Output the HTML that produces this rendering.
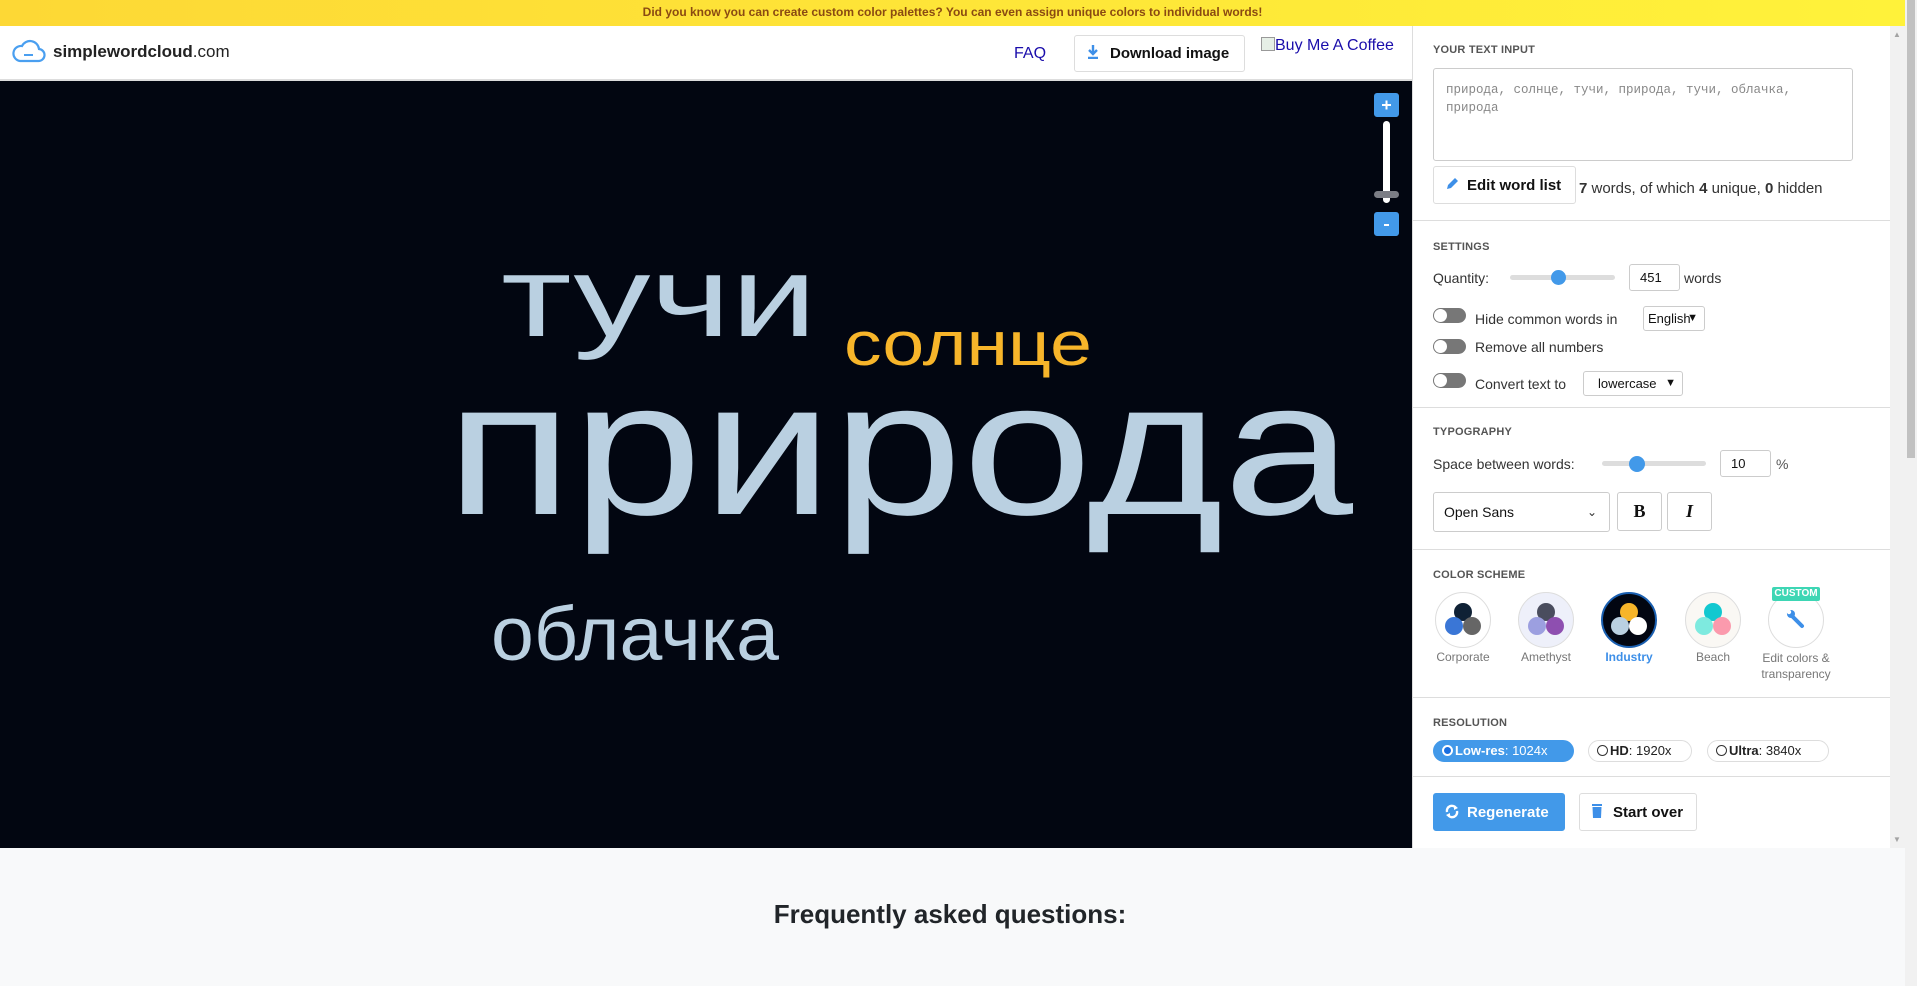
<!DOCTYPE html>
<html><head><meta charset="utf-8">
<style>
*{box-sizing:border-box;margin:0;padding:0}
body{width:1917px;height:986px;overflow:hidden;font-family:"Liberation Sans",sans-serif;background:#fff;position:relative;color:#222}
.a{position:absolute}
.banner{left:0;top:0;width:1905px;height:26px;background:linear-gradient(90deg,#fdd835,#fff23a);text-align:center;font-size:12px;font-weight:bold;color:#8a4a12;line-height:24px}
.h{font-size:11px;font-weight:bold;color:#555;letter-spacing:.2px}
.hr{height:1px;background:#ddd;left:1412px;width:478px}
.lbl{font-size:14px;color:#333}
.inp{border:1px solid #ccc;border-radius:3px;background:#fff;font-size:13px;color:#111;padding-left:10px;white-space:nowrap;overflow:hidden}
.tog{width:33px;height:15px;border-radius:8px;background:#777}
.tog:after{content:"";position:absolute;left:1px;top:1px;width:13px;height:13px;border-radius:50%;background:#fff}
.circ{width:56px;height:56px;border-radius:50%;border:1px solid #ddd}
.dot{position:absolute;width:18px;height:18px;border-radius:50%}
.cl{font-size:12px;color:#777;text-align:center;width:90px}
.pill{height:22px;border-radius:11px;border:1px solid #ddd;font-size:13px;line-height:20px;padding-left:8px;color:#222}
.rad{display:inline-block;width:11px;height:11px;border-radius:50%;border:1px solid #333;vertical-align:-1px;margin-right:2px;background:#fff}
.btn{border:1px solid #ccc;border-radius:3px;background:#fff;font-weight:bold;font-size:15px}
.car{position:absolute;right:6px;top:0;font-size:11px}
</style></head><body>
<div class="a banner">Did you know you can create custom color palettes? You can even assign unique colors to individual words!</div>

<svg class="a" style="left:12px;top:39px" width="34" height="24" viewBox="0 0 34 24"><path d="M8 22 H26 A6 6 0 0 0 27 10 A9 9 0 0 0 10 7 A7.5 7.5 0 0 0 8 22 Z" fill="none" stroke="#4a9ff0" stroke-width="2.2"/><path d="M12 16 H21" stroke="#4a9ff0" stroke-width="2"/></svg>
<div class="a" style="left:53px;top:42px;font-size:17px;color:#222"><b>simplewordcloud</b>.com</div>
<div class="a" style="left:1014px;top:45px;font-size:16px;color:#1a0dab">FAQ</div>
<div class="a btn" style="left:1074px;top:35px;width:171px;height:37px;border-color:#ddd;font-size:15px;padding:9px 0 0 35px;color:#111">Download image</div>
<svg class="a" style="left:1087px;top:45px" width="12" height="14"><path d="M6 0V8M2 5L6 9L10 5M1 13H11" stroke="#3d8fe8" stroke-width="2.4" fill="none"/></svg>
<div class="a" style="left:1261px;top:37px;font-size:16px;color:#1a0dab"><span style="display:inline-block;width:14px;height:14px;border:1px solid #999;vertical-align:-1px;background:#e6efe6"></span>Buy Me A Coffee</div>
<div class="a" style="left:0;top:79px;width:1412px;height:2px;background:#ddd"></div>

<div class="a" style="left:0;top:81px;width:1412px;height:767px;background:#020611"></div>
<svg class="a" style="left:0;top:0" width="1412" height="848">
<g font-family="Liberation Sans, sans-serif" fill="#bad0e1">
<text x="501" y="336" font-size="115" textLength="316" lengthAdjust="spacingAndGlyphs">тучи</text>
<text x="844" y="365" font-size="62" fill="#f7b52a" textLength="248" lengthAdjust="spacingAndGlyphs">солнце</text>
<text x="446" y="514" font-size="192" textLength="907" lengthAdjust="spacingAndGlyphs">природа</text>
<text x="491" y="660" font-size="76" textLength="288" lengthAdjust="spacingAndGlyphs">облачка</text>
</g>
<rect x="1374" y="93" width="25" height="24" rx="3" fill="#4299e9"/>
<path d="M1382 105H1391M1386.5 100.5V109.5" stroke="#fff" stroke-width="2"/>
<rect x="1383" y="121" width="7" height="82" rx="3.5" fill="#fff"/>
<rect x="1374" y="191" width="25" height="7" rx="3.5" fill="#7b7d85"/>
<rect x="1374" y="212" width="25" height="24" rx="3" fill="#4299e9"/>
<path d="M1384 225H1389" stroke="#fff" stroke-width="2"/>
</svg>

<div class="a" style="left:1412px;top:26px;width:1px;height:822px;background:#ddd"></div>
<div class="a h" style="left:1433px;top:44px">YOUR TEXT INPUT</div>
<div class="a inp" style="left:1433px;top:68px;width:420px;height:93px;padding:12px;font-family:'Liberation Mono',monospace;font-size:12.5px;color:#888;line-height:18px;white-space:normal">природа, солнце, тучи, природа, тучи, облачка, природа</div>
<div class="a btn" style="left:1433px;top:166px;width:143px;height:38px;border-color:#ddd;padding:10px 0 0 33px;color:#111">Edit word list</div>
<svg class="a" style="left:1445px;top:177px" width="14" height="14"><path d="M2 12L3 8L10 1L13 4L6 11Z" fill="#3d8fe8"/></svg>
<div class="a" style="left:1579px;top:180px;font-size:15px;color:#333"><b>7</b> words, of which <b>4</b> unique, <b>0</b> hidden</div>
<div class="a hr" style="top:220px"></div>

<div class="a h" style="left:1433px;top:241px">SETTINGS</div>
<div class="a lbl" style="left:1433px;top:270px">Quantity:</div>
<div class="a" style="left:1510px;top:275px;width:105px;height:5px;border-radius:3px;background:#ddd"></div>
<div class="a" style="left:1551px;top:270px;width:15px;height:15px;border-radius:50%;background:#4299e9"></div>
<div class="a inp" style="left:1629px;top:264px;width:51px;height:27px;line-height:25px">451</div>
<div class="a lbl" style="left:1684px;top:270px">words</div>
<div class="a tog" style="left:1433px;top:308px"></div>
<div class="a lbl" style="left:1475px;top:311px">Hide common words in</div>
<div class="a inp" style="left:1643px;top:306px;width:62px;height:25px;line-height:23px;padding-left:4px">English<span class="car">&#9660;</span></div>
<div class="a tog" style="left:1433px;top:339px"></div>
<div class="a lbl" style="left:1475px;top:339px">Remove all numbers</div>
<div class="a tog" style="left:1433px;top:373px"></div>
<div class="a lbl" style="left:1475px;top:376px">Convert text to</div>
<div class="a inp" style="left:1583px;top:371px;width:100px;height:25px;line-height:23px;padding-left:14px">lowercase<span class="car">&#9660;</span></div>
<div class="a hr" style="top:407px"></div>

<div class="a h" style="left:1433px;top:426px">TYPOGRAPHY</div>
<div class="a lbl" style="left:1433px;top:456px">Space between words:</div>
<div class="a" style="left:1602px;top:461px;width:104px;height:5px;border-radius:3px;background:#ddd"></div>
<div class="a" style="left:1629px;top:456px;width:16px;height:16px;border-radius:50%;background:#4299e9"></div>
<div class="a inp" style="left:1720px;top:450px;width:51px;height:27px;line-height:25px">10</div>
<div class="a lbl" style="left:1776px;top:456px;color:#555">%</div>
<div class="a inp" style="left:1433px;top:492px;width:177px;height:40px;line-height:38px;font-size:14px">Open Sans<span style="position:absolute;right:12px;top:0;color:#333;font-size:12px">&#8964;</span></div>
<div class="a inp" style="left:1617px;top:492px;width:45px;height:39px;text-align:center;padding:0;line-height:37px;font-family:'Liberation Serif',serif;font-weight:bold;font-size:18px">B</div>
<div class="a inp" style="left:1667px;top:492px;width:45px;height:39px;text-align:center;padding:0;line-height:37px;font-family:'Liberation Serif',serif;font-style:italic;font-weight:bold;font-size:18px">I</div>
<div class="a hr" style="top:549px"></div>

<div class="a h" style="left:1433px;top:569px">COLOR SCHEME</div>
<div class="a circ" style="left:1435px;top:592px;background:#fff"><div class="dot" style="left:18px;top:10px;background:#0f2135"></div><div class="dot" style="left:9px;top:24px;background:#3a76d6"></div><div class="dot" style="left:27px;top:24px;background:#666"></div></div>
<div class="a circ" style="left:1518px;top:592px;background:#eef0fa"><div class="dot" style="left:18px;top:10px;background:#4a4d5e"></div><div class="dot" style="left:9px;top:24px;background:#9c9fe0"></div><div class="dot" style="left:27px;top:24px;background:#8e4fb0"></div></div>
<div class="a circ" style="left:1601px;top:592px;background:#020611;border:2px solid #1a5fb0"><div class="dot" style="left:17px;top:9px;background:#f7b52a"></div><div class="dot" style="left:8px;top:23px;background:#bad0e1"></div><div class="dot" style="left:26px;top:23px;background:#fff"></div></div>
<div class="a circ" style="left:1685px;top:592px;background:#faf8f4"><div class="dot" style="left:18px;top:10px;background:#12c8d0"></div><div class="dot" style="left:9px;top:24px;background:#7eeadf"></div><div class="dot" style="left:27px;top:24px;background:#fb9aad"></div></div>
<div class="a circ" style="left:1768px;top:592px;background:#fff"></div>
<svg class="a" style="left:1786px;top:609px" width="20" height="20"><path d="M3 4L8 9M8 9L16 17" stroke="#3d8fe8" stroke-width="4" stroke-linecap="round"/><circle cx="5" cy="5" r="4" fill="#3d8fe8"/><circle cx="3" cy="3" r="2.2" fill="#fff"/></svg>
<div class="a" style="left:1772px;top:587px;width:48px;height:14px;background:#3dd6b4;color:#fff;font-size:10px;font-weight:bold;text-align:center;line-height:14px;border-radius:2px">CUSTOM</div>
<div class="a cl" style="left:1418px;top:650px">Corporate</div>
<div class="a cl" style="left:1501px;top:650px">Amethyst</div>
<div class="a cl" style="left:1584px;top:650px;color:#3d8fe8;font-weight:bold">Industry</div>
<div class="a cl" style="left:1668px;top:650px">Beach</div>
<div class="a cl" style="left:1751px;top:650px;line-height:16px;width:90px">Edit colors &amp; transparency</div>
<div class="a hr" style="top:697px"></div>

<div class="a h" style="left:1433px;top:717px">RESOLUTION</div>
<div class="a pill" style="left:1433px;top:740px;width:141px;background:#4299e9;border-color:#4299e9;color:#fff"><span class="rad" style="border:2px solid #fff;background:#1a6fe0"></span><b>Low-res</b>: 1024x</div>
<div class="a pill" style="left:1588px;top:740px;width:104px"><span class="rad"></span><b>HD</b>: 1920x</div>
<div class="a pill" style="left:1707px;top:740px;width:122px"><span class="rad"></span><b>Ultra</b>: 3840x</div>
<div class="a hr" style="top:776px"></div>

<div class="a btn" style="left:1433px;top:793px;width:132px;height:38px;background:#4299e9;border-color:#4299e9;color:#fff;padding:10px 0 0 33px">Regenerate</div>
<svg class="a" style="left:1444px;top:803px" width="16" height="17"><path d="M3 9A5 5 0 0 1 12 5M13 8A5 5 0 0 1 4 12" stroke="#fff" stroke-width="2.4" fill="none"/><path d="M10 2L14 5L10 7Z M6 15L2 12L6 10Z" fill="#fff"/></svg>
<div class="a btn" style="left:1579px;top:793px;width:118px;height:38px;border-color:#ddd;color:#111;padding:10px 0 0 33px">Start over</div>
<svg class="a" style="left:1591px;top:803px" width="12" height="16"><rect x="1" y="1" width="10" height="2" fill="#3d8fe8"/><path d="M1.5 4H10.5L10 15H2Z" fill="#3d8fe8"/></svg>

<div class="a" style="left:1890px;top:26px;width:15px;height:822px;background:#f1f1f1"></div>
<div class="a" style="left:1893px;top:30px;font-size:8px;color:#a3a3a3">▲</div>
<div class="a" style="left:1893px;top:835px;font-size:8px;color:#a3a3a3">▼</div>
<div class="a" style="left:1905px;top:0;width:12px;height:986px;background:#f1f1f1"></div>
<div class="a" style="left:1907px;top:0;width:8px;height:458px;background:#c1c1c1"></div>

<div class="a" style="left:0;top:848px;width:1905px;height:138px;background:#f8f9fa"></div>
<div class="a" style="left:0;top:899px;width:1900px;text-align:center;font-size:26px;font-weight:bold;color:#212529">Frequently asked questions:</div>
</body></html>
